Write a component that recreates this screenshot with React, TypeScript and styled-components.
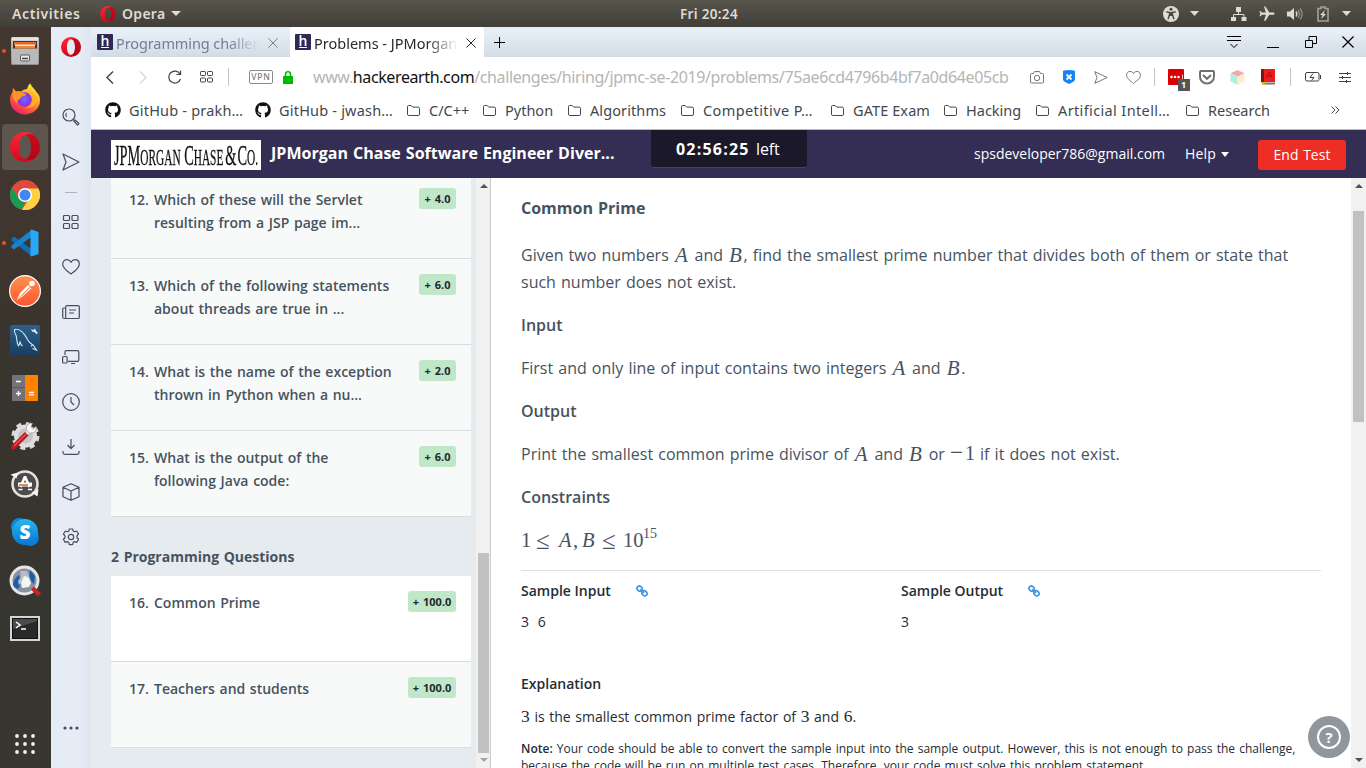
import React from "react";
import styled, { createGlobalStyle, css } from "styled-components";
import { FaGithub } from "react-icons/fa";
import { MdFlight } from "react-icons/md";

const uiFont = `"Noto Sans", "Open Sans", sans-serif`;
const pageFont = `"Open Sans", "Noto Sans", sans-serif`;

const GlobalStyle = createGlobalStyle`
  * { box-sizing: border-box; }
  body { margin: 0; overflow: hidden; background: #fff; }
  svg { display: block; flex: none; }
  h1, h2, p { margin: 0; }
`;

const Desktop = styled.div`
  width: 1366px;
  height: 768px;
  display: flex;
  flex-direction: column;
  overflow: hidden;
  font-family: ${uiFont};
  white-space: nowrap;
`;

/* ---------- system top bar ---------- */

const TopBar = styled.header`
  height: 27px;
  flex: none;
  display: flex;
  align-items: center;
  background: linear-gradient(#58554c, #403e38);
  color: #dfdbd2;
  font-size: 14px;
  font-weight: 600;
`;
const Activities = styled.span`
  width: 88px;
  padding-left: 12px;
  letter-spacing: 0.6px;
`;
const AppMenu = styled.div`
  display: flex;
  align-items: center;
  width: 592px;
  padding-left: 12px;
  gap: 6px;
  letter-spacing: 0.3px;
`;
const Clock = styled.span`
  width: 478px;
  font-size: 13.5px;
  letter-spacing: 0.32px;
`;
const Tray = styled.div`
  display: flex;
  align-items: center;
`;
const TraySlot = styled.span<{ $w: number }>`
  width: ${(p) => p.$w}px;
  display: flex;
  justify-content: center;
`;

/* ---------- dock ---------- */

const Body = styled.div`
  flex: 1;
  min-height: 0;
  display: flex;
`;
const Dock = styled.nav`
  width: 51px;
  flex: none;
  display: flex;
  flex-direction: column;
  background: linear-gradient(#43372f 0, #40362f 25%, #37342e 50%, #383630 100%);
`;
const DockItem = styled.div`
  height: 48.2px;
  flex: none;
  display: flex;
  align-items: center;
  &:first-child { margin-top: -0.6px; }
`;
const Dots = styled.div`
  width: 8px;
  padding-left: 2px;
  display: flex;
  flex-direction: column;
  gap: 2px;
`;
const Dot = styled.i`
  width: 4px;
  height: 4px;
  border-radius: 50%;
  background: #e95420;
`;
const DockTile = styled.div<{ $active?: boolean }>`
  width: 46px;
  height: 46px;
  margin-left: -6px;
  border-radius: 4px;
  display: flex;
  align-items: center;
  justify-content: center;
  ${(p) => p.$active && css`background: #5d564e;`}
`;
const AppsButton = styled.div`
  margin: auto 0 14px 15px;
`;

/* ---------- browser ---------- */

const OperaSidebar = styled.nav`
  width: 40px;
  flex: none;
  display: flex;
  flex-direction: column;
  overflow: hidden;
  background: linear-gradient(90deg, #e5ecf5 70%, #dee6f2);
  color: #454d5a;
`;
const SideSlot = styled.div<{ $h?: number }>`
  height: ${(p) => p.$h ?? 45}px;
  width: 39px;
  flex: none;
  display: flex;
  align-items: center;
  justify-content: center;
`;
const SideRule = styled.i`
  width: 12px;
  height: 1px;
  background: #aab4c2;
`;
const Browser = styled.div`
  flex: 1;
  min-width: 0;
  display: flex;
  flex-direction: column;
`;
const TabStrip = styled.div`
  height: 30px;
  flex: none;
  display: flex;
  background: linear-gradient(#e5edf5 20%, #d3dce5);
`;
const Tab = styled.div<{ $active?: boolean }>`
  width: ${(p) => (p.$active ? 194 : 199)}px;
  height: 31px;
  padding: 0 8px 0 ${(p) => (p.$active ? 5 : 6)}px;
  display: flex;
  align-items: center;
  font-size: 14.5px;
  color: ${(p) => (p.$active ? "#24292e" : "#718096")};
  background: ${(p) => (p.$active ? "#fff" : "transparent")};
  border-radius: 3px 3px 0 0;
`;
const TabTitle = styled.span<{ $ls: number }>`
  flex: none;
  width: 144px;
  margin: 0 8px 0 3px;
  overflow: hidden;
  letter-spacing: ${(p) => p.$ls}px;
  mask-image: linear-gradient(90deg, #000 78%, transparent 100%);
`;
const Favicon = styled.span`
  width: 16px;
  height: 16px;
  flex: none;
  margin-bottom: 1px;
  border-radius: 1px;
  background: #2d2a55;
  color: #fff;
  display: flex;
  flex-direction: column;
  align-items: center;
  font: 600 14px/13px ${pageFont};
  &::after {
    content: "";
    width: 8px;
    height: 1px;
    background: #fff;
  }
`;
const NewTab = styled.div`
  width: 31px;
  display: flex;
  align-items: center;
  justify-content: center;
`;
const WindowButtons = styled.div`
  margin-left: auto;
  width: 151px;
  display: flex;
  align-items: center;
`;
const AddressBar = styled.div`
  height: 40px;
  flex: none;
  display: flex;
  align-items: center;
  background: #fff;
  color: #404040;
`;
const Slot = styled.span<{ $w: number }>`
  width: ${(p) => p.$w}px;
  flex: none;
  display: flex;
  align-items: center;
  justify-content: center;
`;
const VRule = styled.i<{ $w: number }>`
  width: ${(p) => p.$w}px;
  height: 18px;
  flex: none;
  background: linear-gradient(#c4c4c4, #c4c4c4) center / 1px 100% no-repeat;
`;
const Vpn = styled.span`
  width: 24px;
  height: 14px;
  border: 1px solid #8c8c8c;
  border-radius: 2px;
  color: #7b7b7b;
  font-size: 8.5px;
  font-weight: 500;
  line-height: 12px;
  text-align: center;
  letter-spacing: 0.8px;
`;
const Url = styled.span`
  width: 717px;
  padding-left: 9px;
  font-size: 16px;
  color: #b5b5b5;
  letter-spacing: -0.39px;
  b { font-weight: 400; color: #111; }
`;
const BlockBadge = styled.span`
  position: relative;
  width: 16px;
  height: 16px;
  border-radius: 1px;
  background: #dd0000;
`;
const BadgeCount = styled.b`
  position: absolute;
  left: 10px;
  top: 10px;
  width: 12px;
  height: 12px;
  background: #555;
  color: #fff;
  font-size: 9px;
  line-height: 12px;
  text-align: center;
`;
const BookmarkBar = styled.div`
  height: 32px;
  flex: none;
  padding: 0 0 6px 14px;
  display: flex;
  align-items: center;
  background: #fff;
  color: #43484d;
  font-size: 14.5px;
`;
const Bookmark = styled.div<{ $w: number; $ls: number; $folder?: boolean }>`
  width: ${(p) => p.$w}px;
  flex: none;
  display: flex;
  align-items: center;
  gap: ${(p) => (p.$folder ? 9 : 8)}px;
  line-height: 20px;
  letter-spacing: ${(p) => p.$ls}px;
`;

/* ---------- contest page ---------- */

const ContestHeader = styled.header`
  height: 49px;
  flex: none;
  padding-left: 20px;
  border-top: 1px solid #b8b7c6;
  display: flex;
  background: #342e54;
  color: #fff;
  font-family: ${pageFont};
`;
const LogoBox = styled.div`
  width: 150px;
  height: 30px;
  flex: none;
  margin: 10px 10px 0 0;
  padding-left: 3px;
  background: #fff;
`;
const LogoText = styled.div`
  width: 292px;
  height: 30px;
  display: flex;
  align-items: baseline;
  transform: scaleX(0.494);
  transform-origin: left;
  color: #111;
  font: 23px/30px "Liberation Serif", serif;
  -webkit-text-stroke: 0.3px #111;
`;
const LogoCap = styled.span<{ $gap?: number }>`
  margin-left: ${(p) => p.$gap ?? 0}px;
  font-size: 29px;
`;
const ContestTitle = styled.h1`
  width: 380px;
  font-size: 16px;
  font-weight: 700;
  line-height: 46px;
  letter-spacing: 0.02px;
  word-spacing: 0.8px;
`;
const Timer = styled.div`
  width: 156px;
  height: 38px;
  padding-left: 25px;
  border-radius: 0 0 3px 3px;
  border-bottom: 1px solid #494466;
  background: #1b1829;
  font-size: 16px;
  line-height: 38px;
  display: flex;
  gap: 8px;
  b { letter-spacing: 1.2px; width: 72px; }
  span { letter-spacing: -0.1px; }
`;
const AccountArea = styled.div`
  flex: 1;
  padding-left: 167px;
  display: flex;
  font-size: 14px;
  line-height: 48px;
`;
const Email = styled.span`
  width: 211px;
`;
const HelpMenu = styled.span`
  width: 73px;
  display: flex;
  align-items: center;
  gap: 5px;
  letter-spacing: 0.15px;
`;
const EndTest = styled.button`
  width: 88px;
  height: 30px;
  margin-top: 10px;
  padding: 0;
  border: 0;
  border-radius: 3px;
  background: #ee2d24;
  color: #fff;
  font: 400 14px/30px ${pageFont};
  word-spacing: 1px;
`;
const Content = styled.div`
  flex: 1;
  min-height: 0;
  display: flex;
  font-family: ${pageFont};
  background: #fff;
`;
const QuestionPane = styled.aside`
  width: 385px;
  flex: none;
  padding: 0 5px 0 20px;
  background: #e6ebef;
  overflow: hidden;
`;
const QuestionList = styled.div<{ $pull?: boolean }>`
  margin-top: ${(p) => (p.$pull ? -5 : 0)}px;
`;
const Question = styled.div<{ $current?: boolean }>`
  height: 86px;
  padding: 15px 15px 0 18px;
  display: flex;
  border-bottom: 1px solid #d8dde0;
  background: ${(p) => (p.$current ? "#fff" : "#f8faf9")};
  color: #46535e;
  font-size: 14px;
  font-weight: 600;
  line-height: 23px;
`;
const QNumber = styled.span`
  width: 25px;
`;
const QText = styled.span`
  flex: 1;
  white-space: pre;
  word-spacing: 1px;
`;
const Points = styled.span<{ $wide?: boolean }>`
  width: ${(p) => (p.$wide ? 48 : 37)}px;
  height: 21px;
  border-radius: 3px;
  background: #bfe7c8;
  color: #1f2a30;
  font-size: 11px;
  font-weight: 700;
  line-height: 21px;
  text-align: center;
  word-spacing: 1.2px;
`;
const GroupTitle = styled.h2`
  height: 59px;
  padding-top: 29px;
  color: #46535e;
  font-size: 14px;
  font-weight: 700;
  line-height: 22px;
  word-spacing: 1px;
`;
const ScrollTrack = styled.div<{ $line?: boolean }>`
  width: 15px;
  flex: none;
  display: flex;
  flex-direction: column;
  align-items: center;
  background: #f1f1f1;
  ${(p) => p.$line && css`border-right: 1px solid #c8cacc; padding-left: 1px;`}
`;
const ScrollThumb = styled.i<{ $top: number; $h: number }>`
  width: 11px;
  height: ${(p) => p.$h}px;
  margin-top: ${(p) => p.$top}px;
  background: #c1c1c1;
`;
const Arrow = styled.i<{ $up?: boolean; $c?: string; $top: number }>`
  margin-top: ${(p) => p.$top}px;
  border: 4px solid transparent;
  border-width: ${(p) => (p.$up ? "0 4px 4px" : "4px 4px 0")};
  border-${(p) => (p.$up ? "bottom" : "top")}-color: ${(p) => p.$c ?? "#505050"};
`;
const Problem = styled.main`
  position: relative;
  flex: 1;
  min-width: 0;
  padding: 17px 30px 0 30px;
  overflow: hidden;
  color: #46535e;
  word-spacing: 0.95px;
`;
const ProblemTitle = styled.h2`
  height: 27px;
  margin-bottom: 20px;
  font-size: 16px;
  font-weight: 700;
  line-height: 27px;
`;
const Para = styled.p<{ $strong?: boolean }>`
  min-height: 27px;
  margin-bottom: 16px;
  font-size: 16px;
  line-height: 27px;
  font-weight: ${(p) => (p.$strong ? 600 : 400)};
`;
const Line = styled.span`
  display: block;
`;
const Var = styled.i`
  display: inline-block;
  width: 15.5px;
  height: 27px;
  padding-left: 1px;
  vertical-align: top;
  font: italic 21px/26px "Liberation Serif", serif;
`;
const Num = styled.span<{ $size?: number }>`
  display: inline-block;
  font-family: "Liberation Serif", serif;
  font-size: ${(p) => p.$size ?? 20}px;
  line-height: 18px;
`;
const Minus = styled.span`
  display: inline-block;
  width: 15px;
  font-size: 23px;
`;
const Formula = styled.div`
  height: 27px;
  display: flex;
  font: 20.5px/26px "Liberation Serif", serif;
  sup { font-size: 14px; line-height: 14px; }
`;
const Term = styled.span<{ $w: number; $it?: boolean; $rel?: boolean }>`
  width: ${(p) => p.$w}px;
  font-style: ${(p) => (p.$it ? "italic" : "normal")};
  ${(p) => p.$rel && css`font-size: 25px; line-height: 27px;`}
`;
const Samples = styled.section`
  margin-top: 16px;
  padding-top: 10px;
  height: 104px;
  border-top: 1px solid #dedfe1;
  display: flex;
  color: #252c33;
  font-size: 14px;
  line-height: 20px;
`;
const SampleCol = styled.div`
  width: 380px;
  word-spacing: 5px;
`;
const SampleHead = styled.div`
  height: 31px;
  display: flex;
  align-items: flex-start;
  gap: 25px;
  font-weight: 600;
  word-spacing: 0;
  svg { margin-top: 4px; }
`;
const ExplainTitle = styled.h2`
  color: #252c33;
  font-size: 14px;
  font-weight: 600;
  line-height: 20px;
`;
const Explain = styled.p`
  height: 20px;
  margin: 13px 0;
  color: #252c33;
  font-size: 14px;
  line-height: 20px;
  word-spacing: 1px;
`;
const Note = styled.p`
  color: #252c33;
  font-size: 12px;
  line-height: 17px;
  word-spacing: 1px;
  b { font-weight: 600; }
`;
const HelpBubble = styled.div`
  position: absolute;
  right: 1px;
  bottom: 10px;
  width: 42px;
  height: 42px;
  border-radius: 50%;
  background: #8f969e;
  display: flex;
  align-items: center;
  justify-content: center;
`;
const HelpRing = styled.span`
  width: 24px;
  height: 24px;
  border: 2px solid #fff;
  border-radius: 50%;
  color: #fff;
  font: 700 15px/20px ${pageFont};
  text-align: center;
`;

/* ---------- icons ---------- */

const line = { fill: "none", stroke: "currentColor" } as const;

const OperaIcon = ({ size, id }: { size: number; id: string }) => (
  <svg width={size} height={size} viewBox="0 0 30 30">
    <defs>
      <linearGradient id={id} x1="0" x2="0" y1="0" y2="1">
        <stop offset="0" stopColor="#ff2635" />
        <stop offset="1" stopColor="#d10a1d" />
      </linearGradient>
    </defs>
    <path fillRule="evenodd" fill={`url(#${id})`} d="M15 0a15 15 0 1 0 0 30A15 15 0 0 0 15 0M15 3.2c3.9 0 6 5 6 11.8s-2.100 11.800-6 11.800-6-5-6-11.800 2.100-11.800 6-11.800" />
    <path fill="#9c0012" opacity=".6" d="M15 3.200c4-2 8-1.200 10.600 1.300a15 15 0 0 1 0 21c-2.600 2.500-6.600 3.300-10.600 1.300 3.900 0 6-5 6-11.800s-2.100-11.800-6-11.800" />
  </svg>
);

const Caret = ({ w = 10, c = "#dfdbd2" }: { w?: number; c?: string }) => (
  <svg width={w} height={5} viewBox="0 0 10 5" preserveAspectRatio="none"><path fill={c} d="M0 0h10L5 5z" /></svg>
);

const FilesIcon = () => (
  <svg width="30" height="30" viewBox="0 0 30 30">
    <defs><linearGradient id="cab" x1="0" x2="0" y1="0" y2="1"><stop offset="0" stopColor="#c9c9c9" /><stop offset="1" stopColor="#8d8d8d" /></linearGradient></defs>
    <rect x="1" y="1" width="28" height="28" rx="1.500" fill="url(#cab)" />
    <path d="M2 1.500h26v3H2z" fill="#e4e4e4" />
    <path d="M3 5h24v7.500H3z" fill="#42392f" />
    <path d="M4 6h22v3H4z" fill="#e2652a" /><path d="M5 8.500h20v2H5z" fill="#fde3c0" /><path d="M5 10h20v2.500H5z" fill="#e98742" />
    <path d="M2 13h26v15H2z" fill="#b9b9b9" />
    <rect x="10.500" y="19" width="9" height="6" rx="1" fill="#e8e8e8" stroke="#5c5c5c" />
    <path d="M12 22.500h6" stroke="#444" strokeWidth="1.500" />
  </svg>
);

const FirefoxIcon = () => (
  <svg width="32" height="32" viewBox="0 0 32 32">
    <defs>
      <linearGradient id="fx" x1=".8" x2=".2" y1="0" y2="1"><stop offset="0" stopColor="#fff44f" /><stop offset=".35" stopColor="#ffae1f" /><stop offset=".65" stopColor="#ff5b3a" /><stop offset="1" stopColor="#e5166f" /></linearGradient>
      <radialGradient id="fp"><stop offset="0" stopColor="#6f6cff" /><stop offset="1" stopColor="#8a2be0" /></radialGradient>
    </defs>
    <path fill="url(#fx)" d="M18 6C18.500 3.500 20 1.500 21.500.600c1 4 4.500 5 6.200 9 3 2.500 3.800 6 3 11C29 27 23 31.500 16 31.500 7.500 31.500 1 25 1 17c0-3 1-5.500 2.500-8L4 5l3.500 4c2-1 3.500-.8 5-.5 1-1.500 3-2.500 5.500-2.500z" />
    <circle cx="15.500" cy="16.500" r="7.200" fill="url(#fp)" />
    <path fill="#ff9424" d="M3.500 9c3-1 7-1 9 .800 2 .2 4.500.4 4.500 1.500-.5 2-3.500 1.800-5 2.700 0 1.500-.5 1.500-2.500 2.500C8.500 18 8 19 8.500 20.500 5.500 19 3 14 3.500 9z" />
    <path fill="#ffb32b" d="M19 8.500c4 1.500 5.500 5 5 9-.7 4-4 7-8 7 7 1.500 11-2 12-7 .5-4-2-8.500-9-9z" opacity=".85" />
  </svg>
);

const ChromeIcon = () => (
  <svg width="30" height="30" viewBox="0 0 30 30">
    <circle cx="15" cy="15" r="15" fill="#dd4b3e" />
    <path fill="#179c52" d="M2 7.500 9 19l6 3-4 7.500A15 15 0 0 1 2 7.500" />
    <path fill="#fdd142" d="M15 8.500h13.500A15 15 0 0 1 12 29.700l7.500-11.700z" />
    <circle cx="15" cy="15" r="7" fill="#fff" /><circle cx="15" cy="15" r="5.500" fill="#4285f4" />
  </svg>
);

const CodeIcon = () => (
  <svg width="28" height="28" viewBox="0 0 28 28">
    <path fill="#0e6fb5" d="M.5 9.500 3 7.500 21 20.500v7L.5 11.500z" />
    <path fill="#1486d1" d="M.5 18.500 3 20.500 21 7.500v-7L.5 16.500z" />
    <path fill="#29a8f5" d="M20.500.500 27.500 3v22l-7 2.500-1-1.300V2z" />
  </svg>
);

const PostmanIcon = () => (
  <svg width="32" height="32" viewBox="0 0 32 32">
    <defs><linearGradient id="pm" x1="0" x2="0" y1="0" y2="1"><stop offset="0" stopColor="#ff9150" /><stop offset="1" stopColor="#ff552e" /></linearGradient></defs>
    <circle cx="16" cy="16" r="15.400" fill="url(#pm)" stroke="#fff" strokeWidth="1.200" />
    <circle cx="23" cy="8.500" r="2.800" fill="#fff" />
    <path fill="#fff" d="m19 10 3.500 3.200L14 21l-6.500 4.500L11 18z" />
    <path d="m8 24.500 14-13M13 20.500l7-7.500" stroke="#ff6c37" strokeWidth=".8" />
  </svg>
);

const MysqlIcon = () => (
  <svg width="30" height="30" viewBox="0 0 30 30">
    <defs><linearGradient id="my" x1="0" x2="0" y1="0" y2="1"><stop offset="0" stopColor="#2e608d" /><stop offset="1" stopColor="#183f60" /></linearGradient></defs>
    <rect width="30" height="30" rx="2" fill="url(#my)" />
    <path d="M12.500 21c-1.500-1-2-2.500-2.500-4-.7 1.500-.5 3-1.300 4C6 18 7.500 12 5.500 9 4 6.500 4 4 6 4.200c6 0 9 5 11.500 10.300 1.500 3 3.500 4.500 5.500 5.500l3.500 5-4-1.500M22 20l-1 1.500" {...line} stroke="#d6e8f4" strokeWidth="1.100" />
    <path d="M21.500 3.500 23 5.500l2-2 1 2.500 2 2-1.500 1-2.200-2-2.500-.5z" fill="#e4eef5" />
  </svg>
);

const CalcIcon = () => (
  <svg width="26" height="26" viewBox="0 0 26 26">
    <rect width="26" height="26" rx="1" fill="#737277" /><path d="M13 0h12a1 1 0 0 1 1 1v24a1 1 0 0 1-1 1H13z" fill="#ff8100" />
    <path d="M0 12.500h13" stroke="#5a595d" />
    <path d="M4 6.500h5M4 18.500h5M6.500 16v5M17 17.500h5M17 19.800h5" stroke="#fff" strokeWidth="1.300" />
  </svg>
);

const ToolsIcon = () => (
  <svg width="30" height="30" viewBox="0 0 30 30">
    <circle cx="15.500" cy="15" r="12" fill="none" stroke="#dadada" strokeWidth="4" strokeDasharray="5 4.420" />
    <circle cx="15.500" cy="15" r="9.500" fill="#c4c4c4" stroke="#dedede" strokeWidth="4" />
    <path d="M3.500 26 16 13.500" stroke="#b81c20" strokeWidth="5" strokeLinecap="round" />
    <path d="m4 25 12-12" stroke="#ea5453" strokeWidth="1.200" />
    <path d="M16.500 12.500 21 8.500" stroke="#ececec" strokeWidth="4" />
    <path d="M26 5.500a5 5 0 1 1-3.500-3.200L21 6l2 2z" fill="#f6f6f6" stroke="#888" strokeWidth=".6" />
  </svg>
);

const UpdaterIcon = () => (
  <svg width="30" height="30" viewBox="0 0 30 30">
    <circle cx="15" cy="15" r="12.500" fill="#4d4b48" stroke="#e2e2e2" strokeWidth="2.600" />
    <path d="M.5 5.500 8 3.500 6.500 9.500zM28.500 20l-1 7.500-6-4z" fill="#f5f5f5" />
    <path d="M10.500 18 15 7.500 19.500 18" fill="none" stroke="#fff" strokeWidth="2.600" strokeLinejoin="bevel" />
    <path d="M8 15.500h14" stroke="#fff" strokeWidth="4" /><path d="M9 16h9" stroke="#df5b25" strokeWidth="1.500" />
    <path d="M8.500 20.500h4M18 20.500h4" stroke="#fff" strokeWidth="1.500" />
  </svg>
);

const SkypeIcon = () => (
  <svg width="28" height="28" viewBox="0 0 28 28">
    <defs><linearGradient id="sk" x1="0" x2="0" y1="0" y2="1"><stop offset="0" stopColor="#29b5ef" /><stop offset="1" stopColor="#0878d4" /></linearGradient></defs>
    <circle cx="8.500" cy="8.500" r="8.500" fill="#1088d8" /><circle cx="19.500" cy="19.500" r="8.500" fill="#0a7fd8" />
    <circle cx="14" cy="14" r="13" fill="url(#sk)" />
    <text x="14" y="20.500" textAnchor="middle" fill="#fff" fontFamily="Open Sans" fontWeight="800" fontSize="19">S</text>
  </svg>
);

const SearchToolIcon = () => (
  <svg width="32" height="32" viewBox="0 0 32 32">
    <circle cx="15.500" cy="15.500" r="13.500" fill="#87919f" stroke="#e6e6e6" strokeWidth="3" />
    <path d="M4 20c0-4 3-8 6-10l2 8-3 6c-3-1-4-2-5-4M21 5l5 6-1 8-5-5z" fill="#1f5da8" />
    <path d="M11 6h7l4 10-5 4-3-4-4 4-1-4 3-4z" fill="#b9bec4" /><path d="m12 18 3-7 4 1 3 6-2 4-7 1z" fill="#f4f4f4" />
    <path d="m23.500 23 7 7" stroke="#c52528" strokeWidth="4.500" />
  </svg>
);

const TerminalIcon = () => (
  <svg width="30" height="26" viewBox="0 0 30 26">
    <rect width="30" height="25" fill="#d5d5d5" /><rect x="2.500" y="2.500" width="25" height="20" fill="#292929" stroke="#111" />
    <path d="M3 13 27 5v-2H3z" fill="#4b4b4b" /><path d="m6 6 4 3-4 3M11 13h5" {...line} stroke="#fff" strokeWidth="1.500" />
  </svg>
);

const ThreeByThree = () => (
  <svg width="20" height="20" viewBox="0 0 20 20" fill="#f2f1f0">
    {[2, 10, 18].map((y) => [2, 10, 18].map((x) => <circle key={`${x}-${y}`} cx={x} cy={y} r="1.900" />))}
  </svg>
);

const SideIcon = ({ children }: { children: React.ReactNode }) => (
  <svg width="18" height="18" viewBox="0 0 18 18" {...line} strokeWidth="1.200" strokeLinejoin="round">{children}</svg>
);

const heartPath = "M9 16C6 13.500.7 10.500.7 6.200.7 3.300 2.700 1.700 4.900 1.700c1.700 0 3.200 1 4.100 2.600.9-1.600 2.400-2.600 4.100-2.600 2.200 0 4.200 1.600 4.200 4.500C17.300 10.500 12 13.500 9 16z";

const Folder = () => (
  <svg width="13" height="11" viewBox="0 0 13 11" {...line}><path d="M.500 9V1.500q0-1 1-1h2.700l1.500 1.600h5.300q1.500 0 1.500 1.200V9q0 1.500-1.300 1.500H1.800Q.500 10.500.500 9z" /></svg>
);

const LinkIcon = () => (
  <svg width="12" height="12" viewBox="0 0 12 12" {...line} stroke="#3b93e6" strokeWidth="1.600">
    <rect x=".9" y="1.400" width="5.400" height="4.600" rx="2.200" transform="rotate(45 3.600 3.700)" />
    <rect x="5.800" y="6" width="5.400" height="4.600" rx="2.200" transform="rotate(45 8.500 8.300)" />
    <path d="m4.200 4.200 3.800 3.800" />
  </svg>
);

const Cross = ({ s = 10 }: { s?: number }) => (
  <svg width={s} height={s} viewBox="0 0 10 10" {...line}><path d="m.4.400 9.200 9.200m0-9.200L.4 9.600" /></svg>
);

const AccessIcon = () => (
  <svg width="16" height="16" viewBox="0 0 16 16">
    <circle cx="8" cy="8" r="8" fill="#dfdbd2" />
    <circle cx="8" cy="3.300" r="1.500" fill="#4a4841" />
    <path d="M3.300 5.800 6.800 6.500 6.300 9.500 5 13.200M12.700 5.800 9.200 6.500l.5 3L11 13.200" {...line} stroke="#4a4841" strokeWidth="1.400" />
    <path d="M6.300 6h3.400v4H6.300z" fill="#4a4841" />
  </svg>
);

/* ---------- data ---------- */

const dockApps: { icon: React.ReactNode; dots?: number; active?: boolean }[] = [
  { icon: <FilesIcon />, dots: 1 },
  { icon: <FirefoxIcon /> },
  { icon: <OperaIcon size={30} id="op1" />, dots: 2, active: true },
  { icon: <ChromeIcon /> },
  { icon: <CodeIcon />, dots: 1 },
  { icon: <PostmanIcon /> },
  { icon: <MysqlIcon /> },
  { icon: <CalcIcon /> },
  { icon: <ToolsIcon /> },
  { icon: <UpdaterIcon /> },
  { icon: <SkypeIcon /> },
  { icon: <SearchToolIcon /> },
  { icon: <TerminalIcon /> },
];

const bookmarks = [
  { t: "GitHub - prakh…", w: 150, ls: 0.2, git: true },
  { t: "GitHub - jwash…", w: 152, ls: 0.2, git: true },
  { t: "C/C++", w: 76, ls: 0 },
  { t: "Python", w: 85, ls: 0 },
  { t: "Algorithms", w: 113, ls: 0.1 },
  { t: "Competitive P…", w: 150, ls: 0.4 },
  { t: "GATE Exam", w: 113, ls: 0.1 },
  { t: "Hacking", w: 92, ls: 0 },
  { t: "Artificial Intell…", w: 150, ls: 0.37 },
  { t: "Research", w: 145, ls: 0 },
];

const mcqs = [
  { n: 12, t: "Which of these will the Servlet\nresulting from a JSP page im...", p: "4.0" },
  { n: 13, t: "Which of the following statements\nabout threads are true in ...", p: "6.0" },
  { n: 14, t: "What is the name of the exception\nthrown in Python when a nu...", p: "2.0" },
  { n: 15, t: "What is the output of the\nfollowing Java code:", p: "6.0" },
];
const programs = [
  { n: 16, t: "Common Prime", p: "100.0" },
  { n: 17, t: "Teachers and students", p: "100.0" },
];

export default function App() {
  return (
    <Desktop>
      <GlobalStyle />
      <TopBar>
        <Activities>Activities</Activities>
        <AppMenu><OperaIcon size={16} id="op0" />Opera<Caret /></AppMenu>
        <Clock>Fri 20:24</Clock>
        <Tray>
          <TraySlot $w={26}><AccessIcon /></TraySlot>
          <TraySlot $w={20}><Caret w={9} /></TraySlot>
          <TraySlot $w={20} />
          <TraySlot $w={29}>
            <svg width="16" height="16" viewBox="0 0 16 16" fill="#dfdbd2"><path d="M5 1h5v5H5zM0 11h5v4H0zM10.500 11h5v4h-5z" /><path d="M7.500 6v3M2.500 11V8.500H13V11" {...line} /></svg>
          </TraySlot>
          <TraySlot $w={28}><MdFlight size={18} transform="rotate(90)" /></TraySlot>
          <TraySlot $w={27}>
            <svg width="16" height="14" viewBox="0 0 16 14" fill="#dfdbd2"><path d="M0 4.500h3L7 1v12L3 9.500H0z" /><path d="M9 4.500q1.800 2.500 0 5" {...line} strokeWidth="1.300" /><path d="M11 3q3 4 0 8M13 1.500q4.200 5.500 0 11" {...line} strokeWidth="1.300" opacity=".45" /></svg>
          </TraySlot>
          <TraySlot $w={30}>
            <svg width="12" height="16" viewBox="0 0 12 16"><path d="M1 2.500h3V1h4v1.500h3V15H1z" {...line} stroke="#a5a299" strokeWidth="1.600" /><path fill="#dfdbd2" d="M8 4 3 9h2.500L4 13l5-5H6.500z" /></svg>
          </TraySlot>
          <TraySlot $w={16}><Caret w={9} /></TraySlot>
        </Tray>
      </TopBar>
      <Body>
        <Dock>
          {dockApps.map((a, i) => (
            <DockItem key={i}>
              <Dots>{Array.from({ length: a.dots ?? 0 }, (_, d) => <Dot key={d} />)}</Dots>
              <DockTile $active={a.active}>{a.icon}</DockTile>
            </DockItem>
          ))}
          <AppsButton><ThreeByThree /></AppsButton>
        </Dock>
        <OperaSidebar>
          <SideSlot $h={40}><OperaIcon size={20} id="op2" /></SideSlot>
          <SideSlot $h={27.5} />
          <SideSlot><SideIcon><circle cx="7" cy="7" r="6" /><path d="M4.500 9Q3 7 4.500 5" /><path d="m11.500 11.500 1.300 1.300M13 12l4 3.500-1.500 1.500-3.700-4z" /></SideIcon></SideSlot>
          <SideSlot><SideIcon><path d="m1 1 16 8-16 8 3-8z" /></SideIcon></SideSlot>
          <SideSlot $h={15}><SideRule /></SideSlot>
          <SideSlot><SideIcon><rect x="1.500" y="2.500" width="6" height="5" rx="1" /><rect x="10" y="2.500" width="6" height="5" rx="1" /><rect x="1.500" y="10.500" width="6" height="5" rx="1" /><rect x="10" y="10.500" width="6" height="5" rx="1" /></SideIcon></SideSlot>
          <SideSlot><SideIcon><path d={heartPath} /></SideIcon></SideSlot>
          <SideSlot><SideIcon><path d="M3.500 15.500H16q1.300 0 1.300-1.300V4q0-1.300-1.300-1.300H5Q3.700 2.700 3.700 4v10q0 1.500-1.500 1.500T.7 14V6q0-1 1-1h2M7 7h7M7 10h5" /></SideIcon></SideSlot>
          <SideSlot><SideIcon><path d="M3 7V4q0-1.300 1.300-1.300h11.200q1.300 0 1.300 1.300v8q0 1.300-1.300 1.300H6M9 15.500h4" /><rect x=".600" y="8.500" width="4.500" height="6.500" rx="1" /></SideIcon></SideSlot>
          <SideSlot><SideIcon><circle cx="9" cy="9" r="8.300" /><path d="M9 4v5l3 3" /></SideIcon></SideSlot>
          <SideSlot><SideIcon><path d="M9 1v9M5.500 7 9 10.500 12.500 7M1 13v1.500q0 1.800 1.800 1.800h12.400q1.800 0 1.800-1.800V13" /></SideIcon></SideSlot>
          <SideSlot><SideIcon><path d="m9 .700 8 3.500v9.500L9 17.300l-8-3.600V4.200zM1 4.200 9 8l8-3.800M9 8v9" /></SideIcon></SideSlot>
          <SideSlot><SideIcon><circle cx="9" cy="9" r="2.700" /><path d="m7.300 1h3.400l.6 2.300 1 .5 2.300-.8 1.900 2.900L15 7.800v2l1.600 1.500-1.700 3-2.400-.7-1.300.7-.6 2.400H7.300l-.6-2.400-1.200-.7-2.400.7-1.700-3L3 9.800v-2L1.400 6l1.900-3 2.300.8 1.100-.5z" /></SideIcon></SideSlot>
          <SideSlot $h={336}>
            <svg width="16" height="4" viewBox="0 0 16 4" fill="currentColor"><circle cx="2" cy="2" r="1.600" /><circle cx="8" cy="2" r="1.600" /><circle cx="14" cy="2" r="1.600" /></svg>
          </SideSlot>
        </OperaSidebar>
        <Browser>
          <TabStrip>
            <Tab><Favicon>h</Favicon><TabTitle $ls={-0.1}>Programming challenge</TabTitle><Cross /></Tab>
            <Tab $active><Favicon>h</Favicon><TabTitle $ls={0}>Problems - JPMorgan C</TabTitle><Cross /></Tab>
            <NewTab><svg width="11" height="11" viewBox="0 0 11 11" {...line}><path d="M5.500 0v11M0 5.500h11" /></svg></NewTab>
            <WindowButtons>
              <Slot $w={38}><svg width="14" height="13" viewBox="0 0 14 13" {...line}><path d="M0 .5h14M0 4.500h14M3.500 8l3.500 3.500L10.500 8" /></svg></Slot>
              <Slot $w={39}><svg width="12" height="12" viewBox="0 0 12 12" {...line}><path d="M0 11.500h12" /></svg></Slot>
              <Slot $w={38}><svg width="12" height="12" viewBox="0 0 12 12" {...line}><path d="M.5 4.500h7v7h-7zM4 4V.5h7.500v7H8" /></svg></Slot>
              <Slot $w={36}><Cross s={12} /></Slot>
            </WindowButtons>
          </TabStrip>
          <AddressBar>
            <Slot $w={37}><svg width="8" height="13" viewBox="0 0 8 13" {...line} strokeWidth="1.400"><path d="M7 .5 1 6.500l6 6" /></svg></Slot>
            <Slot $w={30}><svg width="8" height="13" viewBox="0 0 8 13" {...line} stroke="#b5b5b5"><path d="m1 .5 6 6-6 6" /></svg></Slot>
            <Slot $w={33}><svg width="14" height="14" viewBox="0 0 14 14" {...line} strokeWidth="1.200"><path d="M12.500 9a6 6 0 1 1-.5-5M12.500.500V4.500H8.500" /></svg></Slot>
            <Slot $w={31}><svg width="13" height="12" viewBox="0 0 13 12" {...line}><rect x=".5" y=".5" width="5" height="4" rx=".8" /><rect x="7.500" y=".5" width="5" height="4" rx=".8" /><rect x=".5" y="7" width="5" height="4" rx=".8" /><rect x="7.500" y="7" width="5" height="4" rx=".8" /></svg></Slot>
            <VRule $w={13} />
            <Slot $w={52}><Vpn>VPN</Vpn></Slot>
            <Slot $w={2}><svg width="10" height="13" viewBox="0 0 10 13"><rect y="5" width="10" height="8" rx=".5" fill="#00b900" /><path d="M2.500 6V3q0-2.200 2.500-2.200T7.500 3v3" fill="none" stroke="#00b900" strokeWidth="1.600" /></svg></Slot>
            <Slot $w={15} />
            <Url>www.<b>hackerearth.com</b>/challenges/hiring/jpmc-se-2019/problems/75ae6cd4796b4bf7a0d64e05cb</Url>
            <Slot $w={32}><svg width="14" height="13" viewBox="0 0 14 13" {...line} stroke="#777"><path d="M.5 3.500q0-1 1-1h2L4.500.5h5l1 2h2q1 0 1 1V11q0 1-1 1h-11q-1 0-1-1z" /><circle cx="7" cy="7" r="2.700" /></svg></Slot>
            <Slot $w={32}><svg width="12" height="14" viewBox="0 0 12 14"><path fill="#1283fb" d="M0 1.500Q0 .500 1 .500L6 0l5 .500q1 0 1 1V9q0 2-2 3l-4 2-4-2q-2-1-2-3z" /><path d="m3.500 4.500 5 5m0-5-5 5" stroke="#fff" strokeWidth="1.800" /></svg></Slot>
            <Slot $w={32}><svg width="14" height="13" viewBox="0 0 14 13" {...line} stroke="#777"><path d="m.800.700 12.400 5.800-12.400 5.800 2.200-5.800z" /></svg></Slot>
            <Slot $w={32}><svg width="15" height="15" viewBox="0 0 18 18" {...line} stroke="#777" strokeWidth="1.200"><path d={heartPath} /></svg></Slot>
            <VRule $w={11} />
            <Slot $w={31}><BlockBadge><svg width="16" height="16" viewBox="0 0 16 16" fill="#fff"><circle cx="3.500" cy="8" r="1.300" /><circle cx="7" cy="8" r="1.300" /><circle cx="10.500" cy="8" r="1.300" /><path d="M14 5.500h.8v5H14z" /></svg><BadgeCount>1</BadgeCount></BlockBadge></Slot>
            <Slot $w={31}><svg width="16" height="15" viewBox="0 0 16 15" {...line} stroke="#6f6f6f" strokeWidth="2"><path d="M1 2q0-1 1-1h12q1 0 1 1v4.500a7 7 0 0 1-14 0z" /><path d="m4.500 5.500 3.500 3.300 3.500-3.300" strokeLinecap="round" /></svg></Slot>
            <Slot $w={31}><svg width="15" height="15" viewBox="0 0 15 15"><path fill="#f7a8ae" d="m7.500 0 7 3.200-7 3.500-7-3.500z" /><path fill="#aef0df" d="m.500 3.500 7 3.500v8l-7-3.800z" /><path fill="#fdeeca" d="m14.500 3.500-7 3.500v8l7-3.800z" /></svg></Slot>
            <Slot $w={31}><svg width="15" height="16" viewBox="0 0 15 16"><path fill="#7a1520" d="M0 0h3v13H0z" /><path fill="#ee1c1c" d="M3 0h11v13H3z" /><path d="M0 13.500h14v2H2z" fill="#777" /><path d="m5.500 9 3-6 3 6M6.500 7h4" {...line} stroke="#a81010" /><path d="M1 13h3v3l-1.500-1L1 16z" fill="#e8b40c" /></svg></Slot>
            <VRule $w={13} />
            <Slot $w={32}><svg width="16" height="10" viewBox="0 0 16 10" {...line}><rect x=".5" y=".5" width="13.500" height="8.500" rx="1.500" /><path d="M15.500 3v4" /><path d="M8 1.500 5 5.500h4L6.500 8.500" /></svg></Slot>
            <Slot $w={32}><svg width="12" height="11" viewBox="0 0 12 11" {...line}><path d="M0 1.500h12M0 5.500h12M0 9.500h12M8.500 0v3M3.500 4v3M7.500 8v3" /></svg></Slot>
          </AddressBar>
          <BookmarkBar>
            {bookmarks.map((b) => (
              <Bookmark key={b.t} $w={b.w} $ls={b.ls} $folder={!b.git}>
                {b.git ? <FaGithub size={16} color="#111" /> : <Folder />}
                {b.t}
              </Bookmark>
            ))}
            <svg width="9" height="8" viewBox="0 0 9 8" {...line}><path d="m.5.500 3.500 3.500L.5 7.500M4.500.500 8 4 4.500 7.500" /></svg>
          </BookmarkBar>
          <ContestHeader>
            <LogoBox>
              <LogoText>
                <LogoCap>JPM</LogoCap>ORGAN<LogoCap $gap={7}>C</LogoCap>HASE<LogoCap $gap={4}>&amp;</LogoCap><LogoCap $gap={2}>C</LogoCap>O.
              </LogoText>
            </LogoBox>
            <ContestTitle>JPMorgan Chase Software Engineer Diver...</ContestTitle>
            <Timer><b>02:56:25</b><span>left</span></Timer>
            <AccountArea>
              <Email>spsdeveloper786@gmail.com</Email>
              <HelpMenu>Help<Caret w={8} c="#fff" /></HelpMenu>
              <EndTest>End Test</EndTest>
            </AccountArea>
          </ContestHeader>
          <Content>
            <QuestionPane>
              <QuestionList $pull>
                {mcqs.map((q) => (
                  <Question key={q.n}><QNumber>{q.n}.</QNumber><QText>{q.t}</QText><Points>+ {q.p}</Points></Question>
                ))}
              </QuestionList>
              <GroupTitle>2 Programming Questions</GroupTitle>
              <QuestionList>
                {programs.map((q) => (
                  <Question key={q.n} $current={q.n === 16}><QNumber>{q.n}.</QNumber><QText>{q.t}</QText><Points $wide>+ {q.p}</Points></Question>
                ))}
              </QuestionList>
            </QuestionPane>
            <ScrollTrack $line>
              <Arrow $up $top={6} />
              <ScrollThumb $top={365} $h={200} />
              <Arrow $top={5} $c="#a3a3a3" />
            </ScrollTrack>
            <Problem>
              <ProblemTitle>Common Prime</ProblemTitle>
              <Para>
                <Line>Given two numbers <Var>A</Var> and <Var>B</Var>, find the smallest prime number that divides both of them or state that</Line>
                <Line>such number does not exist.</Line>
              </Para>
              <Para $strong>Input</Para>
              <Para>First and only line of input contains two integers <Var>A</Var> and <Var>B</Var>.</Para>
              <Para $strong>Output</Para>
              <Para>Print the smallest common prime divisor of <Var>A</Var> and <Var>B</Var> or <Num><Minus>−</Minus>1</Num> if it does not exist.</Para>
              <Para $strong>Constraints</Para>
              <Formula>
                <Term $w={15}>1</Term><Term $w={23} $rel>≤</Term><Term $w={14} $it>A</Term><Term $w={9}>,</Term><Term $w={20} $it>B</Term><Term $w={21} $rel>≤</Term><Term $w={20}>10</Term><sup>15</sup>
              </Formula>
              <Samples>
                <SampleCol><SampleHead>Sample Input<LinkIcon /></SampleHead>3 6</SampleCol>
                <SampleCol><SampleHead>Sample Output<LinkIcon /></SampleHead>3</SampleCol>
              </Samples>
              <ExplainTitle>Explanation</ExplainTitle>
              <Explain><Num $size={17.5}>3</Num> is the smallest common prime factor of <Num $size={17.5}>3</Num> and <Num $size={17.5}>6</Num>.</Explain>
              <Note>
                <Line><b>Note:</b> Your code should be able to convert the sample input into the sample output. However, this is not enough to pass the challenge,</Line>
                <Line>because the code will be run on multiple test cases. Therefore, your code must solve this problem statement.</Line>
              </Note>
              <HelpBubble><HelpRing>?</HelpRing></HelpBubble>
            </Problem>
            <ScrollTrack>
              <Arrow $up $top={6} />
              <ScrollThumb $top={23} $h={211} />
              <Arrow $top={336} />
            </ScrollTrack>
          </Content>
        </Browser>
      </Body>
    </Desktop>
  );
}
